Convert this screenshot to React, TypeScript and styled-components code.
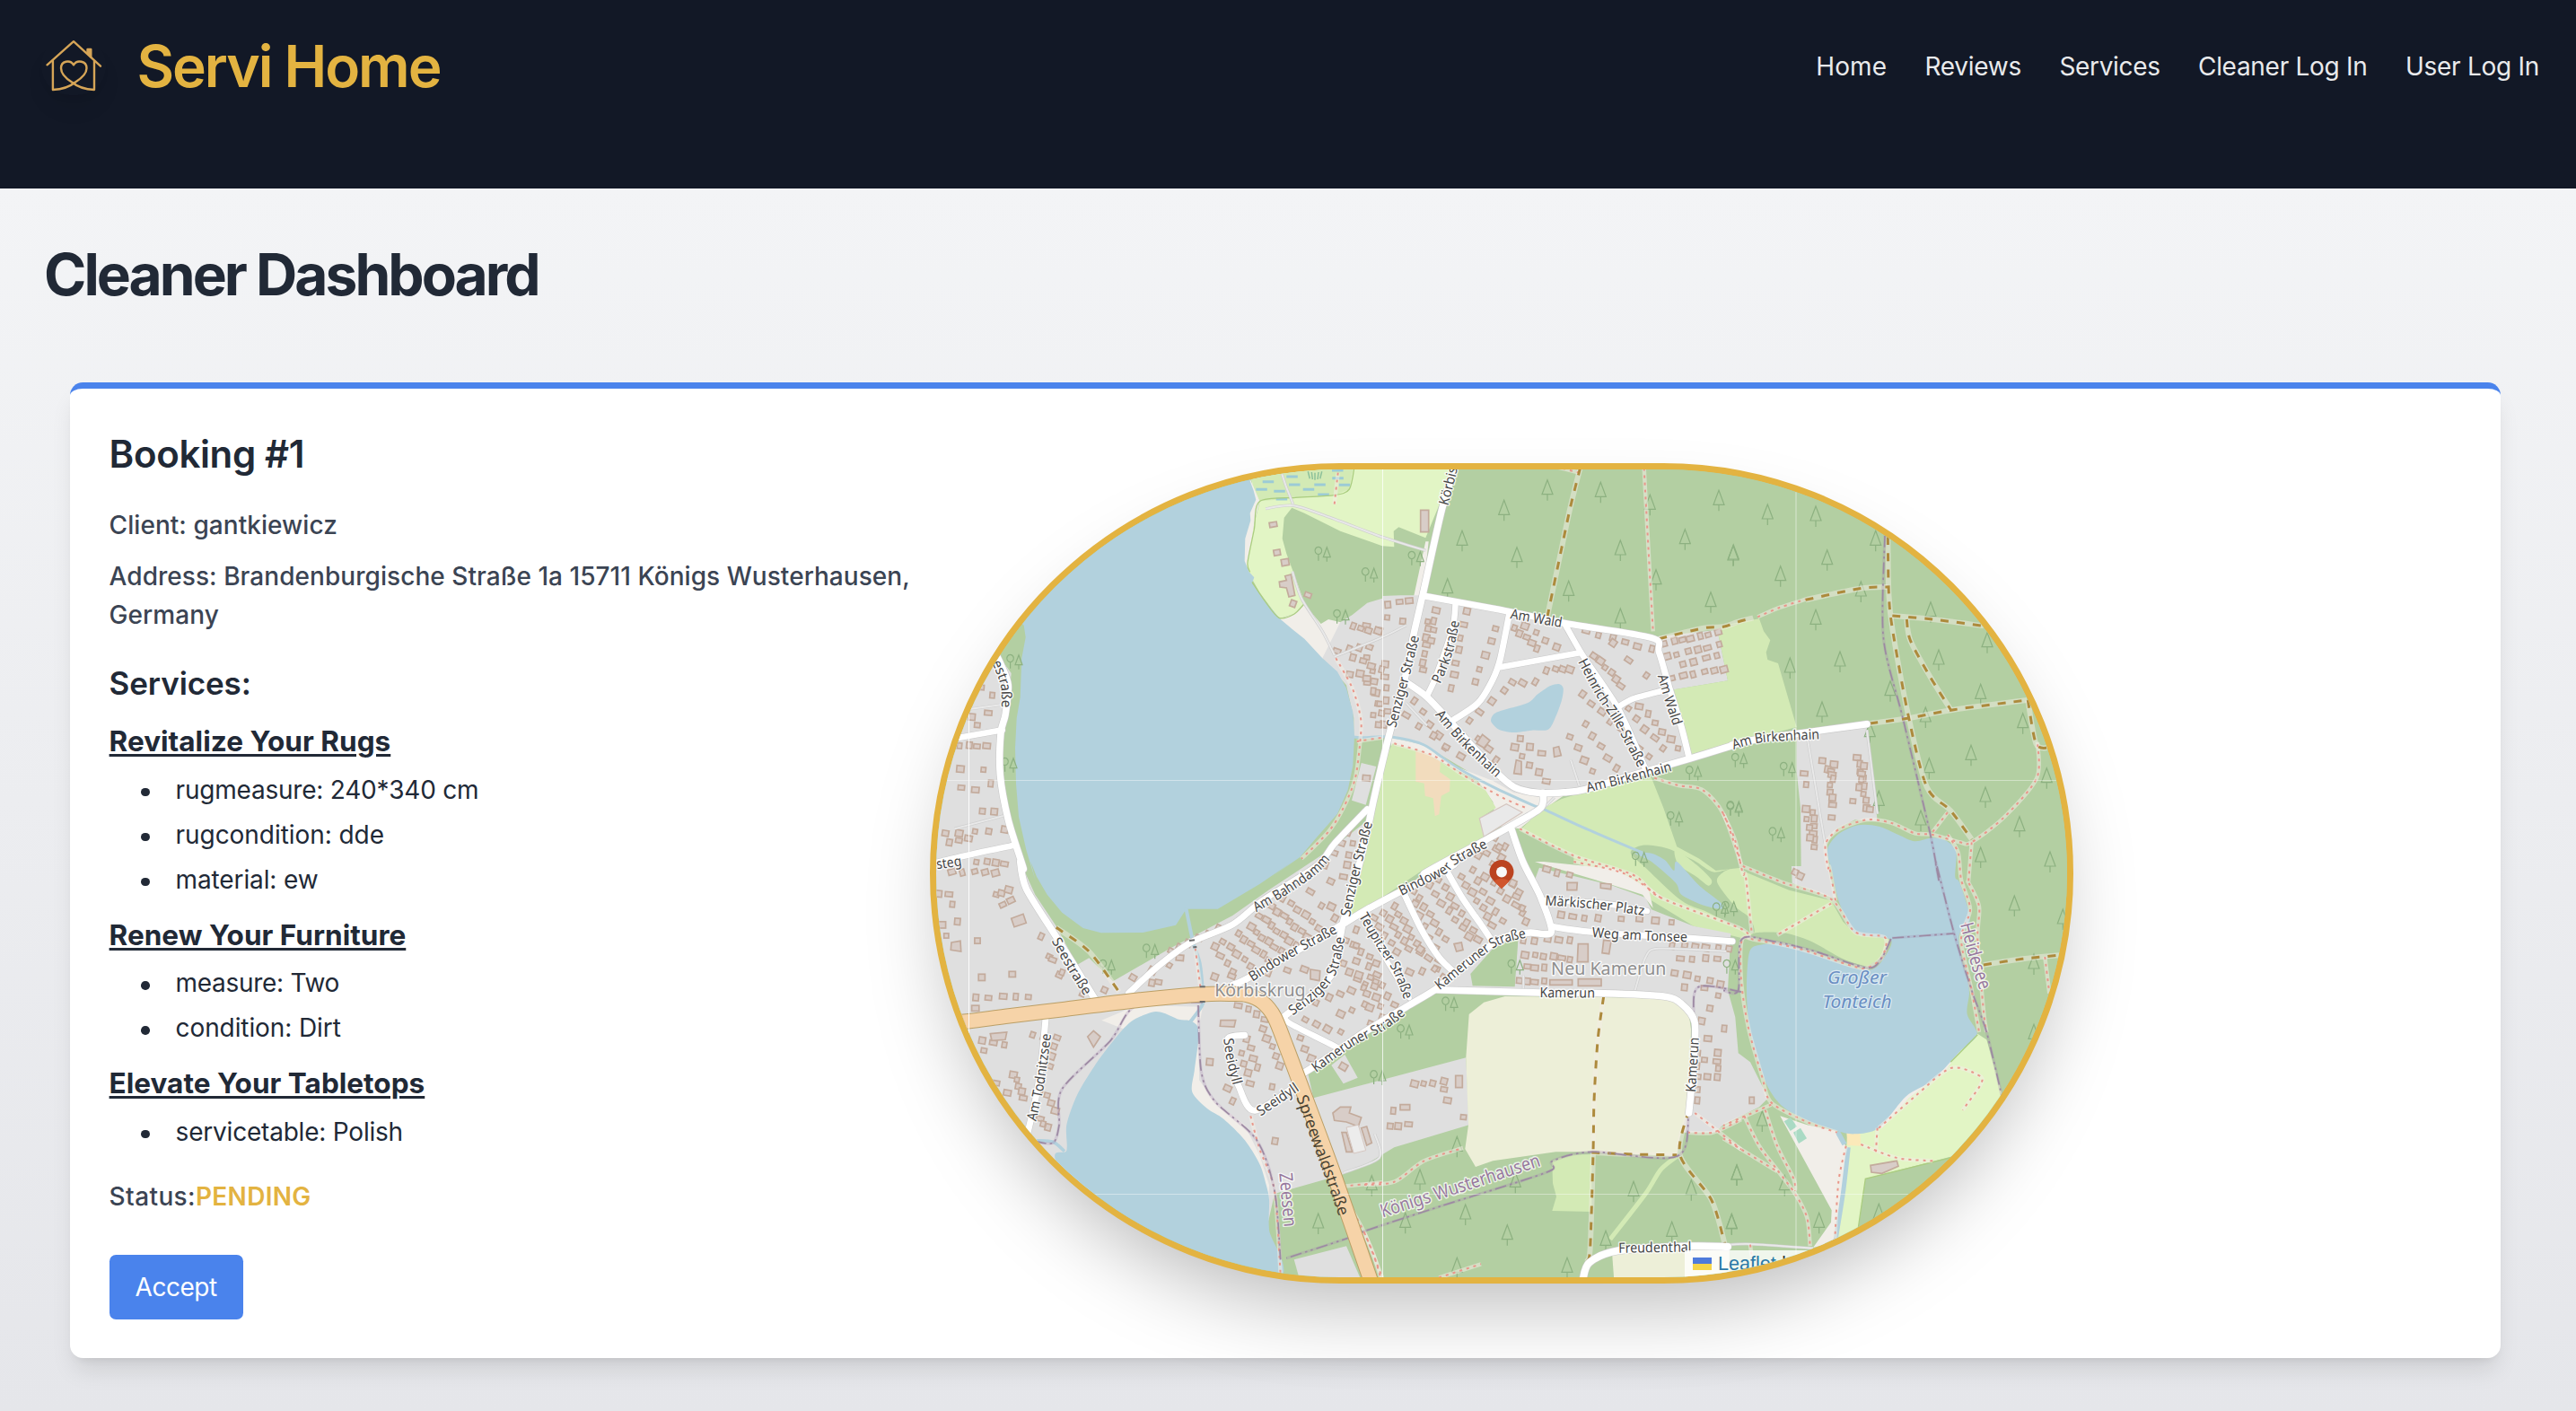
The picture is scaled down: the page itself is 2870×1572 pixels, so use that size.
import React from "react";
import styled, { createGlobalStyle } from "styled-components";

const GlobalStyle = createGlobalStyle`
  *, *::before, *::after { box-sizing: border-box; }
  html, body { margin: 0; padding: 0; }
  body { font-family: Inter, "Liberation Sans", sans-serif; color: #212936; background: #e5e6ea; }
  h1, h2, h3, h4, p, ul { margin: 0; padding: 0; font-weight: inherit; }
`;

/* ---------- page ---------- */

const Page = styled.div`
  display: flex;
  flex-direction: column;
  height: 1572px;
  overflow: hidden;
`;

const Header = styled.header`
  display: flex;
  justify-content: space-between;
  align-items: flex-start;
  flex: none;
  height: 210px;
  padding: 37px 41px 0 46px;
  background: #121826;
`;

const Brand = styled.a`
  display: flex;
  align-items: center;
  gap: 34.5px;
  height: 74px;
`;

const LogoFrame = styled.span`
  display: block;
  width: 72px;
  height: 64px;
  border-radius: 36px;
  box-shadow: 0 18px 27px -5px rgba(0, 0, 0, 0.07), 0 7px 11px -7px rgba(0, 0, 0, 0.1);
  svg { display: block; }
`;

const BrandName = styled.span`
  font-size: 64px;
  line-height: 72px;
  font-weight: 600;
  letter-spacing: -2.05px;
  color: #e3b341;
`;

const Nav = styled.nav`
  display: flex;
  align-items: center;
  gap: 42.4px;
  height: 74px;
`;

const NavLink = styled.a<{ $track: number }>`
  font-size: 28px;
  line-height: 43px;
  letter-spacing: ${(p) => p.$track}px;
  color: #e9eaec;
`;

const Main = styled.main`
  flex: 1;
  padding: 60px 84px 0 49px;
  background: linear-gradient(to bottom, #f3f4f6, #e5e6ea);
`;

const PageTitle = styled.h1`
  font-size: 64px;
  line-height: 72px;
  font-weight: 700;
  letter-spacing: -2.96px;
  color: #212936;
`;

/* ---------- booking card ---------- */

const Card = styled.section`
  display: flex;
  align-items: center;
  height: 1087px;
  margin: 84px 0 0 29px;
  padding: 0 43px;
  border-top: 7px solid #4a83ec;
  border-radius: 14.4px;
  background: #fff;
  box-shadow: 0 18px 27px -5.4px rgba(0, 0, 0, 0.1), 0 7.2px 10.8px -7.2px rgba(0, 0, 0, 0.1);
`;

const Details = styled.div`
  flex: none;
  width: 915px;
  height: 994px;
  padding: 1px 0 0 0.6px;
`;

const BookingTitle = styled.h2`
  margin-bottom: 29px;
  font-size: 42px;
  line-height: 57.6px;
  font-weight: 600;
  letter-spacing: -0.35px;
`;

const Line = styled.p<{ $after: number }>`
  margin-bottom: ${(p) => p.$after}px;
  font-size: 28px;
  line-height: 43.2px;
  font-weight: 500;
  letter-spacing: 0.05px;
  color: #3b4453;
`;

const ServicesTitle = styled.h3`
  margin-bottom: 14.4px;
  font-size: 35px;
  line-height: 50.4px;
  font-weight: 600;
  letter-spacing: -0.1px;
`;

const ServiceName = styled.h4`
  margin-bottom: 7.2px;
  font-size: 31.5px;
  line-height: 50.4px;
  font-weight: 700;
  letter-spacing: 0.02px;
  text-decoration: underline;
  text-decoration-thickness: 2.5px;
  text-underline-offset: 3px;
`;

const Features = styled.ul`
  display: flex;
  flex-direction: column;
  gap: 6.9px;
  margin-bottom: 14.6px;
  padding-left: 35.5px;
  list-style: none;
`;

const Feature = styled.li<{ $track: number }>`
  display: flex;
  align-items: center;
  gap: 29px;
  font-size: 28px;
  line-height: 43.2px;
  letter-spacing: ${(p) => p.$track}px;
  &::before {
    content: "";
    width: 9.5px;
    height: 9.5px;
    margin-top: 4px;
    border-radius: 50%;
    background: #212936;
  }
`;

const Status = styled.p`
  margin: 28.8px 0 43.2px;
  font-size: 28px;
  line-height: 43.2px;
  font-weight: 500;
  letter-spacing: 0.4px;
  color: #3b4453;
`;

const StatusValue = styled.span`
  font-weight: 600;
  letter-spacing: 0.3px;
  color: #e3b341;
`;

const AcceptButton = styled.button`
  display: flex;
  align-items: center;
  justify-content: center;
  width: 149px;
  height: 72px;
  padding: 0;
  border: 0;
  border-radius: 7.2px;
  background: #4a83ec;
  color: #fff;
  font: 400 28px Inter, sans-serif;
  letter-spacing: -0.5px;
`;

/* ---------- map ---------- */

const MapFrame = styled.div`
  position: relative;
  flex: none;
  width: 1274px;
  height: 914px;
  border: 7px solid #e3b341;
  border-radius: 457px;
  overflow: hidden;
  background: #b4cfa2;
  box-shadow: 0 45px 90px -21.6px rgba(0, 0, 0, 0.27);
  svg.tiles { display: block; }
`;

const Attribution = styled.div`
  position: absolute;
  right: 0;
  bottom: 0;
  display: flex;
  align-items: center;
  gap: 7px;
  width: 426px;
  height: 30px;
  padding-left: 9px;
  background: rgba(255, 255, 255, 0.8);
  font: 21.6px "Liberation Sans", Arial, sans-serif;
  color: #333;
  white-space: nowrap;
  a { color: #2a79a7; }
`;

const Flag = styled.i`
  width: 21px;
  height: 14px;
  background: linear-gradient(#4f7bdb 50%, #f6d548 50%);
`;

type Pt = [number, number];

/* The map is surveyed in six sheets; every token "A 120,40" names a sheet and a point on it. */
const SHEETS: Record<string, Pt> = {
  A: [1020, 500], B: [1520, 500], C: [1920, 500],
  D: [1020, 960], E: [1520, 960], F: [1920, 960],
};

function read(src: string): Pt[] {
  let sheet = SHEETS.A;
  const out: Pt[] = [];
  for (const tok of src.trim().split(/\s+/)) {
    if (SHEETS[tok]) { sheet = SHEETS[tok]; continue; }
    const [u, v] = tok.split(",").map(Number);
    out.push([sheet[0] + u / 3, sheet[1] + v / 3]);
  }
  return out;
}

const f = (n: number) => n.toFixed(1);
const straight = (src: string) => "M" + read(src).map((p) => `${f(p[0])} ${f(p[1])}`).join("L");

function curved(src: string, closed = false) {
  const p = read(src);
  const n = p.length;
  const at = (i: number) => (closed ? p[(i + n) % n] : p[Math.max(0, Math.min(n - 1, i))]);
  let d = `M${f(p[0][0])} ${f(p[0][1])}`;
  for (let i = 0; i < (closed ? n : n - 1); i++) {
    const [a, b, c, e] = [at(i - 1), at(i), at(i + 1), at(i + 2)];
    d += `C${f(b[0] + (c[0] - a[0]) / 7)} ${f(b[1] + (c[1] - a[1]) / 7)} ${f(c[0] - (e[0] - b[0]) / 7)} ${f(c[1] - (e[1] - b[1]) / 7)} ${f(c[0])} ${f(c[1])}`;
  }
  return d;
}

const C = {
  forest: "#b3cfa2", water: "#b2d1dd", grass: "#d3eab5", light: "#e2f5c5", town: "#dfdfdf",
  sand: "#f1eee9", farm: "#edefd8",
};

const Area = ({ c, d, soft }: { c: string; d: string; soft?: boolean }) => (
  <path d={(soft ? curved(d, true) : straight(d)) + "Z"} fill={c} />
);

const ROADS: [string, number][] = [
  ["B 310,40 260,200 195,490 165,620 135,770 90,930 60,1050 30,1180 5,1300 D 1470,60 1430,200 1420,250 1395,370 1330,440 1235,515", 7.5],
  ["D 1235,515 1250,540 1410,622 1415,640", 6.5],
  ["D 1060,412 1120,385 1410,220 E 0,165 140,90 300,10 B 200,1420 410,1305 500,1255 590,1200 597,1150", 7.5],
  ["B 140,780 210,830 290,915 430,1070 500,1130 580,1150 670,1148 740,1138 900,1090 1090,1035 1230,992 C 30,990 120,970 300,945 480,920", 7.5],
  ["B 200,492 490,545 670,583 960,632 985,680 1020,800 1060,930 1085,1030", 7],
  ["B 305,512 295,600 240,760 210,825", 6.5],
  ["B 485,550 455,700 430,770 380,850 300,905", 7],
  ["B 455,730 720,682", 6.5],
  ["B 670,585 730,690 850,870 940,1070", 6.5],
  ["B 845,865 900,835 1000,808", 6.5],
  ["B 490,1265 E 530,0 590,120 625,235 555,237 490,245 430,275 330,350 240,425 140,485 0,570 D 1400,640 1300,705", 7.5],
  ["E 130,100 190,225 250,320 300,370", 7],
  ["E 275,30 330,125 390,210 430,270", 7],
  ["E 605,130 800,140 945,165", 6.5],
  ["E 625,217 760,235 1080,255 1230,266", 7],
  ["E 240,428 590,438 800,440 1000,450 1060,475 1105,540 1098,700 1085,840", 7.5],
  ["E 730,1400 752,1340 850,1300 1090,1285 1215,1287", 8],
  ["D 1500,170 E 40,270 150,455", 5.5],
  ["D 712,440 810,350 920,270 1060,210 1160,130 1340,15 A 1400,1320 1510,1205", 7],
  ["A 250,650 285,720 310,790 300,890 285,950 283,1090 310,1240 360,1400 D 350,0 370,90 460,235 520,330 600,460", 7.5],
  ["A 130,968 290,940", 6.5],
  ["A 60,1385 200,1352 330,1325", 6.5],
  ["D 435,525 420,680 400,800 375,905", 7],
  ["D 1100,580 1045,590 1050,660 1080,750 1135,832 1290,735", 7],
];

const LANES = [
  "A 1170,200 1265,190 1400,235 1560,295 B 205,340",
  "A 1260,410 1290,500 1360,610 1400,690",
  "A 1225,85 1240,130 1262,185",
  "B 140,850 210,925", "B 690,1040 718,1125", "B 590,1210 635,1165",
  "A 1400,695 1560,630 B 140,590",
  "F 0,1282 90,1278 300,1292", "E 905,430 940,320 985,290 1210,300",
  "E 532,425 532,380", "C 280,960 340,1320", "C 480,940 515,1220",
  "D 1535,910 1550,990 1430,1040", "A 130,1270 300,1225", "A 180,870 290,855",
];

const TRACKS = [
  "B 722,62 690,190 660,330 612,560",
  "B 985,635 1130,600 1200,595 1250,578 C 100,565", "C 275,505 455,467 550,462",
  "C 550,295 553,480 565,600 620,900 680,1130 760,1210 830,1305",
  "C 565,558 700,570 870,592", "C 613,570 625,640 690,760 760,872",
  "C 490,918 620,900 770,872 1015,840", "C 1018,840 1045,985 1085,1000",
  "F 870,345 1000,325 1130,312",
  "E 800,450 780,600 768,800 765,970 755,1290 745,1335",
  "E 760,972 900,978 1045,980", "E 1085,830 1055,980 1160,1130 1205,1278",
  "D 470,220 580,300 680,435",
];

const PATHS = [
  "B 935,65 945,250 965,610", "C 115,562 190,530 275,503",
  "A 1405,700 1460,800 1488,900 1487,970 1470,1100 1430,1200 1380,1280 1290,1370",
  "A 1475,978 1560,965", "B 970,1100 1050,1125 1130,1140 1200,1220 1260,1390",
  "C 0,1220 40,1310 65,1420 F 75,50 95,240", "B 640,60 720,80",
  "F 375,130 355,20 C 350,1400 342,1320 390,1270 480,1240 560,1250 640,1285 700,1290 790,1315 830,1315 940,1230 1048,1100 1050,980",
  "C 700,1280 750,1215", "C 750,1290 785,1350 F 795,60 825,160 795,260 830,430 855,570",
  "C 830,1315 820,1440 F 820,70 855,150 850,260 870,500 880,570",
  "F 65,15 200,70 360,125 440,235 540,253 530,320 480,355 430,348 250,290 110,262 62,262 60,400 85,560 130,720 160,805 280,870 380,905",
  "F 360,140 180,245", "F 160,812 0,882", "F 70,850 120,950 180,1030 240,1110 280,1190 290,1285",
  "F 140,830 180,950 235,1060 240,1100", "F 0,925 180,1035", "F 460,945 580,990 700,1000",
  "F 515,890 510,970", "F 520,890 640,785 760,690 855,715 860,745 800,830", "F 410,950 385,1070 373,1260",
  "B 520,1270 700,1360 900,1425 E 990,120 1250,220 F 90,255",
  "E 700,0 870,40 990,120", "E 0,1080 100,1070 200,1000 330,957", "E 250,1390 390,1345",
  "E 1105,840 1260,962", "E 1080,905 1165,905 1260,862", "D 1430,1085 1560,1072",
  "D 1120,850 1150,960 1200,1100 1220,1380", "D 1440,1130 1500,1240 1560,1390",
  "D 935,290 955,440", "E 0,1240 30,1310 55,1390", "F 1075,318 1090,440", "F 90,1280 95,1320",
  "B 100,985 230,1025 330,1090 460,1165 540,1200", "A 1412,80 1400,185",
];

const BORDERS = [
  "C 540,290 535,630 600,900 690,1280 720,1440 F 710,0 770,235 830,430 880,570 930,780",
  "F 565,255 770,240", "F 560,258 530,320 480,355 300,298 160,265 60,262 50,430 0,430",
  "E 1260,435 1115,420 1100,550 1085,830 1045,985 760,970 630,1000 628,1030 500,1075 260,1150 0,1235 D 1440,1260 1240,1325",
  "D 960,470 740,480 650,600 490,760 480,880 460,940 400,935",
  "D 945,480 955,700 1000,800 1140,930 1200,1100 1220,1330",
];

/* first point, last point, number of houses, angle of the houses */
const ROWS: [string, number, number][] = [
  ["B 215,575 195,740", 7, 12], ["B 240,540 225,640", 4, 12], ["B 340,545 290,800", 7, 12], ["B 440,600 370,780", 5, 14],
  ["B 500,600 580,665", 5, 20], ["B 540,590 640,665", 4, 20], ["B 495,780 570,780", 3, 30], ["B 465,810 350,910", 4, 35],
  ["B 610,740 690,735", 4, 20], ["B 740,610 960,670", 6, 15], ["B 770,690 860,790", 6, 35], ["B 730,820 950,1030", 8, 35],
  ["B 880,870 1000,1000", 5, 35], ["B 920,860 1050,1000", 6, 10], ["B 830,650 940,760", 3, 35], ["B 690,960 760,1080", 4, 20],
  ["B 740,920 840,1070", 5, 30], ["B 500,1000 610,1110", 5, 10], ["B 385,970 440,1040", 3, 35], ["B 520,970 590,1020", 3, 5],
  ["B 170,840 270,1000", 5, 35], ["B 140,890 320,1030", 5, 30], ["B 30,780 65,920", 5, 10], ["B 80,520 150,508", 3, -5],
  ["B 75,565 130,575", 2, 5], ["B 10,590 50,610", 2, 10], ["B 70,720 75,880", 5, 5], ["B 5,700 10,780", 2, 5],
  ["B 1005,650 1180,615", 7, -15], ["B 1010,695 1185,655", 6, -15], ["B 1030,765 1205,735", 6, -15], ["B 1065,720 1180,690", 4, -15],
  ["A 1460,595 1545,610", 4, 20], ["A 1410,675 1520,660", 4, 20], ["A 1450,755 1525,745", 3, 10], ["A 1465,695 1555,740", 4, 15],
  ["A 1530,890 1550,920", 2, 5], ["A 1505,770 1555,850", 3, 5],
  ["A 190,895 240,885", 2, 5], ["A 205,925 225,930", 1, 5], ["A 150,990 235,995", 4, 5], ["A 150,1070 230,1070", 2, 5],
  ["A 150,1135 200,1140", 2, 5], ["A 225,1210 260,1215", 2, 5], ["A 250,1120 260,1122", 1, 5], ["A 220,795 255,825", 2, 5],
  ["A 100,1285 295,1275", 5, 10], ["A 110,1318 180,1300", 3, 10], ["A 205,1380 300,1385", 4, 10], ["A 120,1415 270,1415", 5, -15],
  ["D 80,105 110,110", 2, 5], ["D 270,110 310,95", 3, 15], ["D 120,145 140,200", 2, 5], ["D 90,210 100,250", 2, 0],
  ["D 290,145 320,128", 2, -25], ["D 210,262 220,388", 2, 0], ["D 420,250 480,380", 3, 25], ["D 455,330 490,370", 2, 20],
  ["D 325,375 330,378", 1, 0], ["D 200,455 380,450", 5, 5], ["D 560,440 630,430", 2, 25], ["D 200,490 205,492", 1, 0],
  ["D 220,600 300,610", 3, 10], ["D 230,630 245,632", 1, 10], ["D 390,580 470,590", 3, 20], ["D 330,710 360,790", 5, 10],
  ["D 270,740 310,770", 2, 10], ["D 460,620 450,680", 3, 20], ["D 420,760 470,830", 4, 15], ["D 415,860 440,890", 3, 15],
  ["D 730,385 850,345", 3, 30], ["D 790,405 815,400", 2, 10], ["D 850,300 1010,225", 6, 25], ["D 885,320 905,330", 1, 5],
  ["D 1000,285 1060,370", 4, 25], ["D 1030,265 1120,350", 5, 30], ["D 1080,240 1180,330", 6, 30], ["D 1120,220 1220,300", 6, 30],
  ["D 1150,180 1270,280", 7, 30], ["D 1190,150 1310,250", 7, 30], ["D 1230,120 1350,220", 6, 30], ["D 1320,100 1400,190", 3, 30],
  ["D 1385,68 1390,150", 2, 25], ["A 1370,1390 1450,1280", 4, 20], ["A 1460,1320 1430,1430", 4, 10], ["A 1510,1098 1520,1110", 1, 5],
  ["D 1000,385 1300,360", 6, 20], ["D 1300,530 1420,570", 4, 30], ["D 1340,470 1540,400", 6, 25], ["D 1420,510 1500,480", 3, 25],
  ["D 1440,260 1540,340", 5, 20], ["D 1430,340 1500,420", 4, 20], ["D 1470,230 1480,380", 4, 20], ["D 1080,480 1200,540", 5, 10],
  ["D 1160,560 1220,680", 5, 20], ["D 1110,590 1140,690", 4, 15], ["D 1090,640 1120,740", 4, 15], ["D 1040,760 1060,800", 2, 25],
  ["D 985,668 990,670", 1, 5], ["D 1285,590 1320,660", 3, 20], ["D 1195,750 1200,935", 2, 10], ["D 1430,685 1435,686", 1, 30],
  ["E 30,190 110,300", 5, 30], ["E 65,170 150,290", 6, 30], ["E 100,150 190,300", 7, 30], ["E 165,95 270,260", 7, 30],
  ["E 170,140 250,330", 6, 30], ["E 215,80 350,250", 7, 30], ["E 250,60 380,260", 8, 30], ["E 150,370 240,360", 3, 25],
  ["E 190,290 260,390", 4, 35], ["E 325,50 430,210", 7, 30], ["E 360,30 460,200", 6, 30], ["E 405,50 530,170", 6, 30],
  ["E 430,10 520,100", 5, 30], ["E 480,30 540,200", 5, 25], ["E 15,350 60,520", 6, 20], ["E 40,380 100,480", 4, 25],
  ["E 10,440 20,540", 3, 20], ["B 380,1360 470,1330", 4, 30], ["B 440,1300 480,1430", 5, 30],
  ["E 610,25 685,45", 3, 15], ["E 655,180 780,190", 4, 10], ["E 860,190 1030,200", 4, 5], ["E 530,265 690,260", 5, 10],
  ["E 540,310 690,325", 6, 10], ["E 545,350 600,355", 3, 5], ["E 515,400 600,400", 4, 5], ["E 1030,280 1220,290", 6, 10],
  ["E 1055,325 1180,325", 4, 5], ["E 1040,370 1190,410", 5, 10], ["E 1070,420 1140,420", 2, 5], ["E 1180,450 1130,530", 3, 10],
  ["E 1150,590 1200,560", 2, 5], ["E 1180,640 1180,720", 4, 5], ["E 1140,660 1145,720", 2, 5], ["E 1115,640 1110,800", 5, 5],
  ["E 165,745 265,735", 4, 15], ["E 268,760 275,800", 2, 10], ["E 85,885 145,880", 3, 5], ["E 100,830 330,855", 2, 5],
  ["C 270,1085 280,1120", 2, 5], ["C 328,1045 370,1055", 2, 5], ["C 350,1070 370,1100", 4, 10], ["C 355,1125 365,1190", 4, 5],
  ["C 450,1030 480,1200", 8, 5], ["C 470,1060 455,1130", 4, 5], ["C 430,1180 490,1205", 2, 5], ["C 300,1215 305,1330", 6, 5],
  ["C 275,1205 290,1300", 4, 5], ["C 365,1230 366,1232", 1, 5], ["F 240,35 260,45", 2, 25], ["F 92,800 93,802", 1, 0],
  ["A 1197,252 1198,253", 1, -10], ["A 1207,348 1237,378", 2, -10], ["A 1265,515 1310,490", 2, 20],
];

function houses() {
  const out: React.ReactNode[] = [];
  ROWS.forEach(([src, n, angle], r) => {
    const [[x1, y1], [x2, y2]] = read(src);
    for (let i = 0; i < n; i++) {
      const t = n === 1 ? 0 : i / (n - 1);
      const j = ((r * 7 + i * 13) % 5) - 2;
      const w = 5.2 + ((r * 3 + i * 5) % 4);
      const h = 5.2 + ((r + i * 7) % 3);
      const x = x1 + (x2 - x1) * t + j * 0.5;
      const y = y1 + (y2 - y1) * t - j * 0.4;
      out.push(<rect key={`${r}-${i}`} x={-w / 2} y={-h / 2} width={w} height={h} transform={`translate(${f(x)} ${f(y)}) rotate(${angle})`} />);
    }
  });
  return out;
}

const HALLS = [
  "B 188,205 215,205 215,278 188,278", "A 1235,425 1255,420 1268,490 1248,495 1240,465 1218,462 1216,445 1240,440",
  "E 715,275 748,275 748,335 712,335", "E 800,262 825,265 818,308 795,305", "E 620,395 695,395 695,412 620,412",
  "E 715,392 792,392 792,415 715,415", "D 1395,840 1420,820 1455,820 1450,840 1490,855 1480,885 1440,870 1400,865",
  "D 1425,905 1440,905 1460,970 1440,970", "D 1490,890 1508,885 1525,940 1508,948", "D 320,190 360,175 370,205 330,218",
  "D 120,270 150,265 152,300 118,295", "D 250,575 305,570 300,595 255,598", "D 575,585 595,565 618,585 595,620",
  "D 1020,530 1070,530 1065,552 1018,550", "F 492,1015 580,1000 585,1018 530,1042 495,1038",
  "D 1320,360 1352,365 1350,398 1320,392", "E 305,715 328,715 328,755 305,755", "E 678,70 712,70 710,95 678,95",
  "E 790,72 825,75 824,92 790,88", "E 300,275 325,270 330,295 308,300", "B 508,1040 525,1045 525,1088 500,1085",
  "B 632,1000 650,995 658,1025 635,1030", "B 395,955 420,975 400,1000 375,985", "E 120,812 152,812 152,830 120,830",
];

const CONIFERS = `B 612,140 467,208 327,310 510,365 790,148 955,190 1185,175 1072,305 1233,360 856,342 683,478 975,440 1158,515 856,570 278,470
C 148,222 309,228 34,357 347,374 191,428 509,310 309,574 390,714 223,735 330,882 558,812 460,480 693,548 882,650 720,708 860,823 1001,920 676,900 828,1027 688,1070 1081,1103 876,1167 520,1180 660,1245 990,1265 860,1368 1092,1383 490,950
D 1346,1212 E 310,955 186,1065 25,1085 505,1075 338,1182 137,1210 478,1250 310,1360 678,1360 807,1270 1028,1240 900,1105 1093,1100 1245,1050 1228,1215
F 973,150 1135,195 1038,345 1038,580 45,1050 28,1213 320,1210 520,1180 205,1085 130,870`;
const MIXED = `A 1360,350 1517,420 1422,560 330,710 312,1055 B 172,365 1100,1083 1037,1235 1237,1203 920,1370 C 53,1040 215,1070 37,1200 178,1288
D 785,298 640,350 E 285,475 135,567 505,350 45,720 1190,160 F 25,350 20,155`;

type Label = [string, string, number, string?];
const STREETS: Label[] = [
  ["Am Wald", "B 490,552 580,568 720,592", 58], ["Am Birkenhain", "B 248,880 340,985 470,1105", 97],
  ["Am Birkenhain", "B 743,1133 900,1095 1060,1052", 97], ["Am Birkenhain", "C 30,990 130,966 345,953", 98],
  ["Heinrich-Zille-Straße", "B 728,705 790,820 850,910 940,1080", 136], ["Am Wald", "B 995,755 1020,840 1055,945", 58],
  ["Parkstraße", "B 240,780 280,680 308,550", 72], ["Senziger Straße", "B 90,930 130,780 175,600", 105],
  ["Körbis", "B 265,187 300,50 330,-90", 43], ["Am Bahndamm", "D 1132,155 1240,92 1340,20 A 1420,1305", 100],
  ["Senziger Straße", "D 1437,182 1470,30 A 1515,1235", 108], ["Bindower Straße", "D 1118,388 1260,300 1440,205", 110],
  ["Senziger Straße", "D 1252,502 1340,435 1395,360 1425,225", 105], ["Bindower Straße", "E 118,100 260,30 B 300,1375 440,1300", 111],
  ["Teupitzer Straße", "E -5,175 60,285 110,360 155,475", 107], ["Kameruner Straße", "E 243,418 390,300 460,258 580,230", 117],
  ["Kameruner Straße", "D 1330,692 1460,600 1560,550 E 165,470", 119], ["Märkischer Platz", "E 605,130 780,143 960,168", 111],
  ["Weg am Tonsee", "E 762,237 920,247 1110,253", 106], ["Kamerun", "E 587,438 820,440", 61],
  ["Kamerun", "E 1092,770 1105,560", 61], ["Freudenthal", "E 850,1292 1120,1288", 81],
  ["Seestraße", "D 468,258 520,350 580,445", 71],
  ["estraße", "A 270,708 300,790 303,880", 54], ["Am Todnitzsee", "D 388,865 415,740 440,560", 98],
  ["Seeidyll", "D 1045,590 1055,660 1080,760", 52], ["Seeidyll", "D 1145,838 1210,795 1300,735", 52],
  ["steg", "A 70,1390 175,1374", 28],
];
const MAIN_STREETS: Label[] = [["Spreewaldstraße", "D 1290,782 1340,925 1390,1060 1445,1215", 141]];
const PLACES: Label[] = [
  ["Neu Kamerun", "E 625,357 1060,357", 128, "#8e8e8e"], ["Körbiskrug", "D 1000,430 1340,430", 101, "#8e8e8e"],
  ["Zeesen", "D 1236,1040 1255,1250", 60, "#97799e"], ["Königs Wusterhausen", "E 55,1170 320,1085 620,985", 186, "#97799e"],
  ["Heidesee", "F 812,205 845,330 885,450", 76, "#97799e"],
];

function Labels({ list, size, prefix }: { list: Label[]; size: number; prefix: string }) {
  return (
    <g fontFamily='"Noto Sans", sans-serif' fontSize={size} stroke="#ffffff" strokeOpacity={0.75} strokeWidth={3} strokeLinejoin="round" paintOrder="stroke">
      {list.map(([text, src, len, color], i) => (
        <g key={i}>
          <path id={`${prefix}${i}`} d={curved(src)} fill="none" stroke="none" />
          <text fill={color || "#464646"} dy={size * 0.33} textLength={len} lengthAdjust="spacingAndGlyphs">
            <textPath href={`#${prefix}${i}`} textLength={len} lengthAdjust="spacingAndGlyphs">{text}</textPath>
          </text>
        </g>
      ))}
    </g>
  );
}

function MapTiles() {
  return (
    <svg className="tiles" width="1260" height="900" viewBox="1043 523 1260 900">
      <rect x="1043" y="523" width="1260" height="900" fill={C.forest} />

      <Area c={C.light} d="A 1110,40 1130,140 1150,180 1130,260 1105,400 1150,480 1215,568 1265,552 1300,515 1262,410 1240,350 1226,300 1232,230 1258,197 1300,215 1420,275 1560,325 B 100,328 98,275 115,262 205,298 245,200 310,40" />
      <Area c={C.grass} d="A 1110,40 1130,130 1150,175 1270,165 1400,155 1450,135 1468,40" />
      <Area c={C.sand} d="A 1118,100 1150,175 1132,250 1108,400 1120,440 1085,380 1100,200" />
      <Area c={C.sand} d="A 1215,570 1265,552 1300,520 1355,585 1380,570 1430,582 1360,710" />
      <Area c={C.sand} d="B 205,310 215,310 195,490 165,495" />

      {/* village north */}
      <Area c={C.town} d="A 1360,700 1420,580 1460,555 1510,515 1560,500 B 60,492 120,490 200,490 490,545 960,630 1180,605 1215,775 1035,805 1090,1030 940,1090 640,1165 600,1200 400,1110 200,990 90,965 0,965 A 1465,965 1465,900 1440,790" />
      <Area c={C.sand} d="B 90,965 200,990 300,1060 430,1110 500,1150 560,1155 680,1150 600,1205 520,1270 440,1260 430,1180 380,1110 190,1010 90,1000" />
      <Area c={C.grass} d="B 1035,805 1215,775 1180,603 1255,585 C 0,590 120,568 135,610 157,640 143,680 148,705 183,717 245,930 C 0,995 B 1090,1035" />
      <Area c={C.grass} d="B 95,985 185,1010 300,1070 405,1140 440,1200 385,1235 405,1300 200,1405 E 0,160 D 1430,205 1490,0 A 1530,1200 B 60,1050" />
      <Area c={C.grass} d="B 600,1200 660,1170 740,1145 960,1100 1000,1200 1045,1330 1120,1370 1175,1410 1260,1400 1260,1440 F 0,30 40,25 75,35 220,95 360,130 400,200 440,240 560,260 530,320 480,350 400,330 250,285 130,265 60,255 0,240 E 1100,215 960,130 940,100 700,0 B 700,1360 520,1275" />
      <Area c={C.forest} soft d="B 890,1350 930,1325 1010,1335 1100,1375 1170,1415 1260,1390 F 0,35 -20,70 40,150 90,190 95,240 E 1150,170 1060,130 940,20" />
      <Area c={C.grass} soft d="E 1040,-40 1110,10 1160,60 1150,80 1110,50 1050,10" />
      <Area c={C.forest} soft d="F 100,240 200,238 290,265 400,325 480,355 400,345 250,300 100,275" />
      <Area c="#f2dcbd" d="B 172,1010 200,1015 255,1045 252,1080 287,1105 285,1145 257,1160 250,1222 236,1228 230,1168 203,1160 200,1118 172,1112" />
      <Area c={C.town} d="C 245,950 480,925 515,1245 440,1240 380,1270 345,1320 355,1420 F 378,125 230,72 228,15 260,15 C 260,1400 258,1200 245,1080" />

      {/* village south */}
      <Area c={C.town} d="A 0,690 280,695 320,750 310,860 290,950 283,1100 330,1300 D 350,0 400,110 470,215 540,345 580,322 660,400 850,290 1060,180 1180,95 A 1400,1330 1500,1250 1530,1200 D 1490,20 1440,200 E 100,110 B 400,1310 490,1275 570,1440 E 585,20 830,80 940,120 960,160 1100,215 1225,240 1215,430 1240,520 1250,640 F 90,670 150,790 120,820 0,880 E 1170,905 1060,905 1100,540 1060,460 1000,445 240,432 D 1330,690 1310,700 1330,790 E 0,745 340,655 350,880 100,955 0,1015 D 1430,1045 1200,1110 1180,1200 480,1100 380,900 0,1000" />
      <Area c={C.forest} d="A 1485,1000 1510,980 1560,975 1540,1060 1490,1050" />
      <Area c={C.town} d="A 1490,1050 1540,1062 1505,1190 1458,1175" />
      <Area c={C.sand} d="E 570,0 600,0 840,25 950,90 965,155 930,110 820,75 600,10" />
      <Area c={C.forest} d="E 355,375 430,290 515,250 503,418 362,415" />
      <Area c={C.town} d="D 1390,680 1435,645 1478,722 1430,742" />
      <Area c={C.town} d="D 1265,1330 1440,1285 1490,1400 1285,1400" />
      <Area c={C.farm} d="E 350,510 400,470 470,450 980,455 1050,472 1085,510 1092,560 1085,820 1055,920 1045,985 750,970 640,970 430,1000 372,1020 337,960 348,880 340,655" />
      <Area c={C.grass} d="E 628,1000 680,980 760,978 760,1170 628,1167 642,1120 630,1075" />
      <Area c={C.farm} d="E 828,1305 850,1300 1220,1290 1220,1400 835,1400" />
      <path d={curved("E 822,1262 940,1110 990,1030 1045,985")} fill="none" stroke={C.grass} strokeWidth="5" />

      {/* east shore */}
      <Area c={C.light} d="F 850,575 880,595 935,790 765,985 620,1022 475,1060 450,1230 360,1280 400,1100 415,910 520,890 620,780 760,655" />
      <Area c={C.sand} d="F 190,850 280,880 380,900 415,960 378,1270 300,1290 360,1205 362,1165" />
      <Area c="#fbe9b9" d="F 412,903 457,905 460,950 415,948" />
      <Area c={C.sand} d="F 500,880 600,780 690,730 755,650 790,635 740,700 620,790 530,890" />
      <Area c="#aadac4" d="F 203,868 225,855 246,885 224,900" />
      <Area c="#aadac4" d="F 234,905 258,890 279,925 252,942" />

      {/* water */}
      <Area c={C.sand} d="D 622,530 740,480 960,485 948,545 948,730 1000,800 1100,880 1150,980 1182,1080 1180,1130 1080,1000 900,800 800,600" />
      <Area c={C.water} d="A 1112,40 1115,100 1130,140 1138,170 1118,215 1120,240 1102,300 1100,375 1115,412 1132,430 1125,450 1165,505 1220,570 1262,605 1300,635 1360,700 1410,745 1440,800 1462,880 1467,960 1462,1060 1445,1140 1410,1220 1340,1300 1285,1365 1190,1430 D 1260,0 1150,75 1010,158 905,158 870,212 760,237 620,238 560,222 490,170 440,110 405,50 385,0 A 400,1440 370,1340 345,1230 336,1120 333,1000 338,900 350,830 355,700 368,630 362,590 330,560 300,0" />
      <Area c={C.water} soft d="D 473,1010 505,965 505,880 540,780 600,680 660,600 720,535 790,503 830,506 880,527 915,531 942,550 945,600 932,700 925,770 975,825 1030,860 1100,930 1150,1010 1172,1080 1182,1130 1182,1230 1205,1400 700,1400" />
      <Area c={C.water} soft d="B 424,912 430,890 455,876 545,850 580,820 620,793 650,786 665,800 660,840 640,895 615,938 560,941 500,948 450,938" />
      <Area c={C.water} soft d="B 905,1352 960,1352 1005,1375 1035,1410 E 1045,0 1120,80 1195,140 1190,158 1130,145 1060,110 1040,70 960,0" />
      <Area c={C.water} soft d="C 348,1340 385,1288 450,1258 520,1262 585,1290 640,1312 700,1300 745,1310 778,1345 775,1430 F 790,70 822,170 820,210 788,245 795,320 815,390 822,440 815,510 848,578 790,635 740,690 690,738 610,785 520,890 440,910 380,900 280,865 200,820 150,755 110,650 85,540 78,420 88,300 130,277 200,276 280,300 430,352 490,362 530,332 560,262 450,243 420,210 385,130 365,40" />
      <g fill="none" stroke={C.water}>
        <path d={curved("A 1465,963 B 0,965 90,963 200,990 300,1060 430,1130 560,1190 600,1205 730,1265 930,1350")} strokeWidth="3" />
        <path d={curved("D 903,150 928,270 950,340 960,440 958,480 915,540")} strokeWidth="4" />
        <path d={curved("D 405,932 460,937 498,968")} strokeWidth="3.6" />
        <path d={curved("F 382,903 405,945")} strokeWidth="5.5" />
        <path d={curved("F 418,955 400,1110 375,1265")} strokeWidth="5" />
      </g>
      <g stroke="#9ccbd6" strokeWidth="3">
        {read("A 1160,110 1138,136 1198,142 1240,93 1248,120 1333,120 1295,136 1205,168 1392,72 1393,98 1415,121 1345,153").map(([x, y], i) => (
          <path key={i} d={`M${f(x)} ${f(y)}h12.5`} />
        ))}
      </g>
      <g stroke="#8dc09a" strokeWidth="1.5">
        {read("A 1318,100 1327,102 1335,104 1344,102 1352,100").map(([x, y], i) => (
          <path key={i} d={`M${f(x)} ${f(y)}l${i - 2} -8`} />
        ))}
      </g>
      <g fill="none" stroke="#abcd80" strokeWidth="1.3">
        <path d={curved("A 1467,60 1450,135 1400,155 1270,163 1150,176 1132,270 1110,380 1118,412")} />
        <path d={curved("A 1125,445 1165,505 1215,565 1265,553 1298,520")} />
        <path d={straight("F 850,578 760,670")} />
        <path d={straight("F 450,1230 475,1060 765,988")} />
      </g>

      {/* trees */}
      <g fill="none" stroke="#8db181" strokeWidth="1.2">
        {read(CONIFERS).map(([x, y], i) => (
          <path key={i} d={`M${f(x)} ${f(y - 12)}l6 16h-12zM${f(x)} ${f(y + 4)}v7`} />
        ))}
        {read(MIXED).map(([x, y], i) => (
          <path key={i} d={`M${f(x - 4.5)} ${f(y + 1)}a3.8 4.2 0 1 1 .1 0v7M${f(x + 5)} ${f(y - 7)}l4 11h-8zM${f(x + 5)} ${f(y + 4)}v5`} />
        ))}
      </g>

      {/* buildings */}
      <g fill="#d8cdc8" stroke="#c3ab9c" strokeWidth="1.7">
        {houses()}
        {HALLS.map((h, i) => <path key={i} d={straight(h) + "Z"} />)}
      </g>
      <path d={straight("B 385,1235 475,1187 528,1215 400,1297") + "Z"} fill="#e9e9e9" stroke="#d5c6c0" strokeWidth="1.2" />
      <path d={straight("D 1440,888 1480,880 1505,965 1465,975") + "Z"} fill="#ececec" stroke="#d5c6c0" strokeWidth="1" />

      {/* ways */}
      <g fill="none" strokeLinejoin="round">
        {LANES.map((d, i) => <path key={i} d={curved(d)} stroke="#cfcfcf" strokeWidth="3.2" />)}
        {LANES.map((d, i) => <path key={i} d={curved(d)} stroke="#e9e9e9" strokeWidth="1.8" />)}
        {PATHS.map((d, i) => <path key={i} d={curved(d)} stroke="#f3ede4" strokeOpacity="0.55" strokeWidth="4.5" />)}
        {TRACKS.map((d, i) => <path key={i} d={curved(d)} stroke="#f3ede4" strokeOpacity="0.5" strokeWidth="6" />)}
        {BORDERS.map((d, i) => <path key={i} d={curved(d)} stroke="#a585b0" strokeOpacity="0.25" strokeWidth="3.2" />)}
        {PATHS.map((d, i) => <path key={i} d={curved(d)} stroke="#e9968a" strokeWidth="2" strokeDasharray="3 5" />)}
        {TRACKS.map((d, i) => <path key={i} d={curved(d)} stroke="#ad8a3c" strokeWidth="3" strokeDasharray="9 9" />)}
        {BORDERS.map((d, i) => <path key={i} d={curved(d)} stroke="#9c89a2" strokeWidth="1.7" strokeDasharray="13 4 2.5 4 2.5 4" />)}
        {ROADS.map(([d, w], i) => <path key={i} d={curved(d)} stroke="#cacaca" strokeWidth={w + 1.2} strokeLinecap="round" />)}
        {ROADS.map(([d, w], i) => <path key={i} d={curved(d)} stroke="#fff" strokeWidth={w} strokeLinecap="round" />)}
        <path d={curved("D -60,556 170,534 300,517 500,493 750,462 960,443 1060,442 1110,446 1160,470 1200,520 1240,620 1300,780 1400,1050 1525,1410")} stroke="#bb9f66" strokeWidth="17.4" />
        <path d={curved("D -60,556 170,534 300,517 500,493 750,462 960,443 1060,442 1110,446 1160,470 1200,520 1240,620 1300,780 1400,1050 1525,1410")} stroke="#f6d3a8" strokeWidth="15.4" />
      </g>
      <g stroke="#6c6c6c" strokeWidth="2">
        <path d={straight("D 950,418 968,418")} />
        <path d={straight("D 950,468 968,468")} />
        <path d={straight("D 915,264 933,262")} />
        <path d={straight("D 928,286 940,285")} />
      </g>

      <Labels list={STREETS} size={15.5} prefix="street" />
      <Labels list={PLACES} size={20.5} prefix="place" />
      <g fontFamily='"Noto Sans", sans-serif' fontSize="20" fontStyle="italic" fill="#6a8fc2" stroke="#dbe9f2" strokeWidth="2.5" paintOrder="stroke">
        <text x="2036" y="1096" textLength="66" lengthAdjust="spacingAndGlyphs">Großer</text>
        <text x="2030.500" y="1122.500" textLength="77" lengthAdjust="spacingAndGlyphs">Tonteich</text>
      </g>
      <g fontFamily='"Noto Sans", sans-serif' fontSize="18" fill="#4a4334">
        {MAIN_STREETS.map(([text, src, len], i) => (
          <g key={i}>
            <path id={`main${i}`} d={curved(src)} fill="none" />
            <text dy="6" textLength={len} lengthAdjust="spacingAndGlyphs">
              <textPath href={`#main${i}`} textLength={len} lengthAdjust="spacingAndGlyphs">{text}</textPath>
            </text>
          </g>
        ))}
      </g>

      {/* tile seams */}
      <g stroke="#fff" strokeOpacity="0.4" strokeWidth="1">
        <path d="M1540.500 523V1423" strokeOpacity="0.75" />
        <path d="M1079.500 523V1423" strokeOpacity="0.9" />
        <path d="M2001 523V1423" strokeOpacity="0.5" />
        <path d="M1043 869.500H2303M1043 1330.500H2303" />
      </g>

      {/* marker */}
      <path d="M1673 990l-8.500 -8.500c-3 -3 -5 -6 -5 -10a13.500 13.500 0 0 1 27 0c0 4 -2 7 -5 10z" fill="#bb4320" />
      <path d="M1664.500 982c3 -4 14 -4 17 0l-8.500 8z" fill="#d0552c" />
      <circle cx="1673" cy="971.500" r="6" fill="#f8f8f8" />
    </svg>
  );
}

function Logo() {
  return (
    <svg width="72" height="64" viewBox="46 42 72 64" fill="none" stroke="#d6a557" strokeWidth="2.4" strokeLinecap="round" strokeLinejoin="round">
      <path d="M52.500 72.300L82 46.200L112 73.700" />
      <path d="M97.500 59V55H101.300V63.500Z" fill="#d6a557" />
      <path d="M58.900 67.500V100C70 99.500 78 96.500 84 91.500C92 86.500 96.500 81 96.500 76C96.500 68 86 66 82 72.300C78 66 68 68 68 76C68 81 72 86.500 80 91.500C86 96.500 94 99.500 105 100V68" />
    </svg>
  );
}

const NAV: [string, number][] = [["Home", 0.1], ["Reviews", -0.27], ["Services", -0.34], ["Cleaner Log In", -0.29], ["User Log In", -0.27]];

const SERVICES: { name: string; features: [string, number][] }[] = [
  { name: "Revitalize Your Rugs", features: [["rugmeasure: 240*340 cm", -0.22], ["rugcondition: dde", -0.06], ["material: ew", -0.13]] },
  { name: "Renew Your Furniture", features: [["measure: Two", -0.3], ["condition: Dirt", -0.1]] },
  { name: "Elevate Your Tabletops", features: [["servicetable: Polish", -0.21]] },
];

export default function App() {
  return (
    <Page>
      <GlobalStyle />
      <Header>
        <Brand>
          <LogoFrame><Logo /></LogoFrame>
          <BrandName>Servi Home</BrandName>
        </Brand>
        <Nav>
          {NAV.map(([label, track]) => <NavLink key={label} $track={track}>{label}</NavLink>)}
        </Nav>
      </Header>
      <Main>
        <PageTitle>Cleaner Dashboard</PageTitle>
        <Card>
          <Details>
            <BookingTitle>Booking #1</BookingTitle>
            <Line $after={14.4}>Client: gantkiewicz</Line>
            <Line $after={28.8}>Address: Brandenburgische Straße 1a 15711 Königs Wusterhausen, Germany</Line>
            <ServicesTitle>Services:</ServicesTitle>
            {SERVICES.map((s) => (
              <React.Fragment key={s.name}>
                <ServiceName>{s.name}</ServiceName>
                <Features>
                  {s.features.map(([text, track]) => <Feature key={text} $track={track}>{text}</Feature>)}
                </Features>
              </React.Fragment>
            ))}
            <Status>Status:<StatusValue>PENDING</StatusValue></Status>
            <AcceptButton>Accept</AcceptButton>
          </Details>
          <MapFrame>
            <MapTiles />
            <Attribution>
              <Flag />
              <span><a>Leaflet</a> |</span>
            </Attribution>
          </MapFrame>
        </Card>
      </Main>
    </Page>
  );
}
